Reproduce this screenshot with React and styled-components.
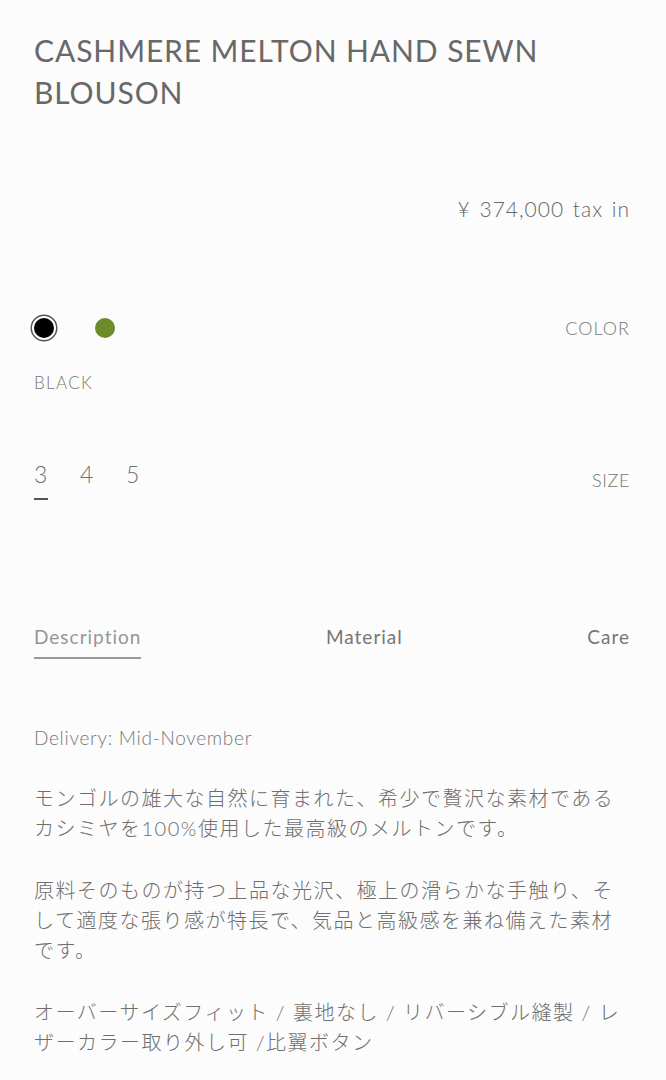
import styled, { createGlobalStyle } from "styled-components";

const GlobalStyle = createGlobalStyle`
  body {
    margin: 0;
    background: #fcfcfc;
    font-family: Lato, "Noto Sans CJK JP", sans-serif;
  }
`

const Page = styled.div`
  width: 666px;
  box-sizing: border-box;
  padding: 29px 36px 40px 34px;
  color: #6e6e6e;
`

const Title = styled.h1`
  margin: 0;
  font-family: Lato, sans-serif;
  font-weight: 400;
  font-size: 30px;
  line-height: 42px;
  letter-spacing: 0.9px;
  color: #686868;
  text-transform: uppercase;
`

const Price = styled.div`
  margin-top: 82px;
  text-align: right;
  font-size: 21px;
  line-height: 28px;
  font-weight: 300;
  letter-spacing: 1px;
  word-spacing: 2px;
  color: #666;
`

const OptionRow = styled.div`
  display: flex;
  justify-content: space-between;
  align-items: ${(p) => p.$align || "center"};
  margin-top: ${(p) => p.$top}px;
`

const Swatches = styled.div`
  display: flex;
  align-items: center;
  gap: 39px;
`

const Swatch = styled.span`
  display: block;
  box-sizing: border-box;
  width: ${(p) => (p.$selected ? 24 : 20)}px;
  height: ${(p) => (p.$selected ? 24 : 20)}px;
  border-radius: 50%;
  background: ${(p) => p.$color};
  border: ${(p) => (p.$selected ? "2px solid #fff" : "none")};
  box-shadow: ${(p) => (p.$selected ? "0 0 0 1.5px #555" : "none")};
  margin-left: ${(p) => (p.$selected ? -2 : 0)}px;
`

const OptionLabel = styled.span`
  font-size: 18px;
  line-height: 24px;
  font-weight: 300;
  letter-spacing: ${(p) => p.$spacing || 1}px;
  color: #777;
  margin-top: ${(p) => p.$top || 0}px;
`

const ColorName = styled.div`
  margin-top: 31px;
  font-size: 17px;
  line-height: 24px;
  font-weight: 300;
  letter-spacing: 1.3px;
  color: #777;
`

const Sizes = styled.div`
  display: flex;
  gap: 32px;
`

const SizeItem = styled.div`
  display: flex;
  flex-direction: column;
  align-items: flex-start;
  font-size: 23px;
  line-height: 28px;
  font-weight: 300;
  color: #707070;

  &::after {
    content: "";
    display: block;
    width: 14px;
    height: 2px;
    margin-top: 10px;
    background: ${(p) => (p.$active ? "#555" : "transparent")};
  }
`

const Tabs = styled.div`
  display: flex;
  justify-content: space-between;
  align-items: flex-start;
  margin-top: 125px;
`

const Tab = styled.div`
  font-size: 19px;
  line-height: 24px;
  font-weight: 400;
  letter-spacing: 1px;
  padding-bottom: 8px;
  color: ${(p) => (p.$active ? "#969696" : "#767676")};
  border-bottom: 2px solid ${(p) => (p.$active ? "#999" : "transparent")};
`

const Delivery = styled.div`
  margin-top: 67px;
  font-size: 19px;
  line-height: 24px;
  font-weight: 300;
  letter-spacing: 0.7px;
  color: #777;
`

const Body = styled.div`
  margin-top: 33px;
  font-family: Lato, "Noto Sans CJK JP", sans-serif;
  font-size: 20px;
  line-height: 30px;
  font-weight: 300;
  letter-spacing: 1.5px;
  color: #6e6e6e;

  p {
    margin: 0 0 32px;
  }
`

const App = () => {
  return (
    <Page>
      <GlobalStyle />
      <Title>Cashmere Melton Hand Sewn Blouson</Title>
      <Price>¥ 374,000 tax in</Price>

      <OptionRow $top={93}>
        <Swatches>
          <Swatch $color="#000" $selected />
          <Swatch $color="#6b8c28" />
        </Swatches>
        <OptionLabel>COLOR</OptionLabel>
      </OptionRow>
      <ColorName>BLACK</ColorName>

      <OptionRow $top={65} $align="flex-start">
        <Sizes>
          <SizeItem $active>3</SizeItem>
          <SizeItem>4</SizeItem>
          <SizeItem>5</SizeItem>
        </Sizes>
        <OptionLabel $top={8} $spacing={0.6}>SIZE</OptionLabel>
      </OptionRow>

      <Tabs>
        <Tab $active>Description</Tab>
        <Tab>Material</Tab>
        <Tab>Care</Tab>
      </Tabs>

      <Delivery>Delivery: Mid-November</Delivery>

      <Body>
        <p>モンゴルの雄大な自然に育まれた、希少で贅沢な素材であるカシミヤを100%使用した最高級のメルトンです。</p>
        <p>原料そのものが持つ上品な光沢、極上の滑らかな手触り、そして適度な張り感が特長で、気品と高級感を兼ね備えた素材です。</p>
        <p>オーバーサイズフィット / 裏地なし / リバーシブル縫製 / レザーカラー取り外し可 /比翼ボタン</p>
      </Body>
    </Page>
  )
}

export default App
